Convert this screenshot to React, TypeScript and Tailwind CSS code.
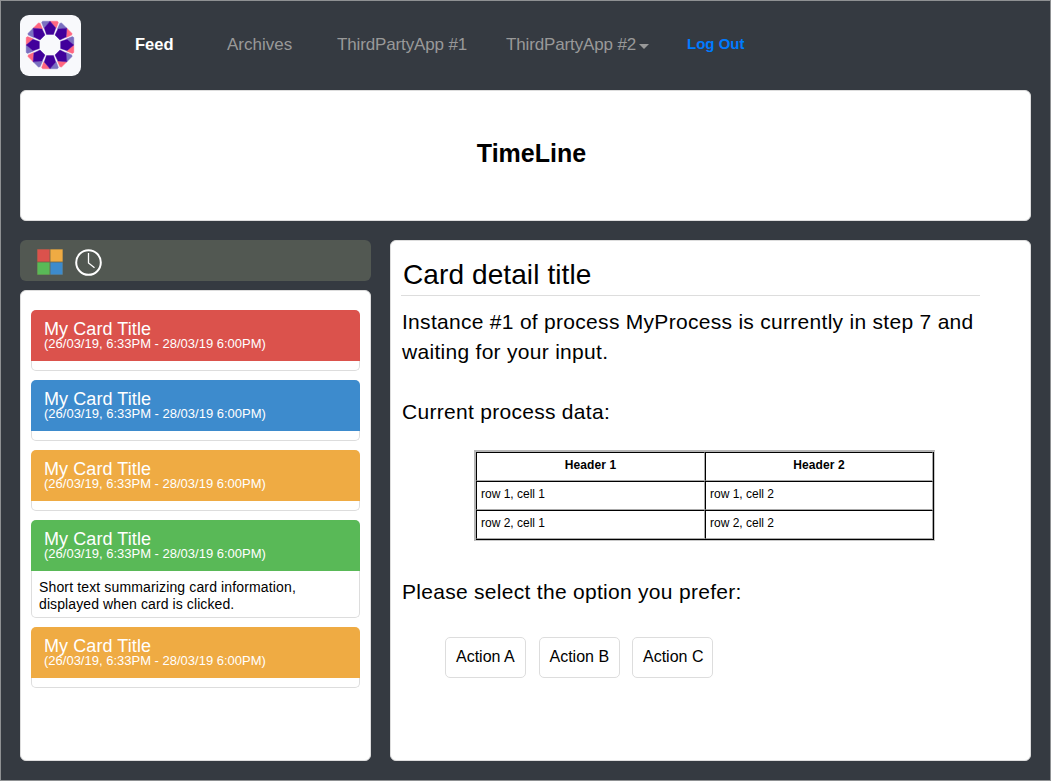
type Card = { color: string; summary?: string[] };

const cards: Card[] = [
  { color: "bg-[#db524c]" },
  { color: "bg-[#3d8bcd]" },
  { color: "bg-[#efab43]" },
  {
    color: "bg-[#59b957]",
    summary: ["Short text summarizing card information,", "displayed when card is clicked."],
  },
  { color: "bg-[#efab43]" },
];

const petals = [0, 45, 90, 135, 180, 225, 270, 315];

function Logo() {
  return (
    <div className="flex h-[61px] w-[61px] shrink-0 items-center justify-center rounded-[9px] bg-[#f8f9fc] pr-[2px] pb-px">
      <svg width="50" height="50" viewBox="-25 -25 50 50">
        {petals.map((angle) => (
          <g key={angle} transform={`rotate(${angle})`} strokeLinejoin="round" strokeWidth="0.4">
            <path d="M0-23.8H-7.4L-8.4-22.4L-6.2-16.8Z" fill="#7a70c0" stroke="#7a70c0" />
            <path d="M0-23.8H7.4L8.4-22.4L6.2-16.8Z" fill="#ff6680" stroke="#ff6680" />
            <path d="M0-23.8L5.8-17L3.5-10.6H-3.5L-5.8-17Z" fill="#41009b" stroke="#41009b" />
          </g>
        ))}
      </svg>
    </div>
  );
}

function NavBar() {
  return (
    <header className="flex h-[61px] items-center">
      <Logo />
      <nav className="flex items-center pb-px pl-[54px] text-[17px] leading-5 text-[#999]">
        <a className="mb-0.5 w-[92px] text-[16.5px] font-bold text-white">Feed</a>
        <a className="w-[110px]">Archives</a>
        <a className="w-[169px] tracking-[-0.14px]">ThirdPartyApp #1</a>
        <a className="flex w-[181px] items-center gap-[3px] tracking-[-0.14px]">
          ThirdPartyApp #2
          <svg width="10" height="5" viewBox="0 0 10 5" className="mt-[2px] shrink-0">
            <path d="M0 0H10L5 5Z" fill="#999" />
          </svg>
        </a>
        <a className="mb-0.5 text-[15px] font-bold text-[#007bff]">Log Out</a>
      </nav>
    </header>
  );
}

function Toolbar() {
  return (
    <div className="flex h-[41px] items-center gap-3 rounded-md bg-[#525852] pt-[3px] pl-[17px]">
      <svg width="26" height="26" viewBox="0 0 26 26">
        <rect width="26" height="26" fill="#6b6448" />
        <rect x="0.4" y="0.4" width="12.2" height="12.2" fill="#db524c" />
        <rect x="13.4" y="0.4" width="12.2" height="12.2" fill="#efab43" />
        <rect x="0.4" y="13.4" width="12.2" height="12.2" fill="#59b957" />
        <rect x="13.4" y="13.4" width="12.2" height="12.2" fill="#3d8bcd" />
      </svg>
      <svg width="27" height="27" viewBox="0 0 27 27" fill="none" stroke="#fff">
        <circle cx="13.5" cy="13.5" r="12.3" strokeWidth="2" />
        <path d="M13.5 4V14L19.5 18.7" strokeWidth="1.3" />
      </svg>
    </div>
  );
}

function FeedCard({ color, summary }: Card) {
  return (
    <article>
      <div className={`h-[51px] rounded-t-[5px] pt-[11px] pl-[13px] text-white ${color}`}>
        <h2 className="text-[18px] leading-4 tracking-[0.08px]">My Card Title</h2>
        <p className="text-[13px] leading-[13px]">(26/03/19, 6:33PM - 28/03/19 6:00PM)</p>
      </div>
      <div className="min-h-[10px] rounded-b-[5px] border border-t-0 border-[#ddd]">
        {summary && (
          <p className="h-[46px] pt-[8px] pl-[7px] text-[14px] leading-[17px] tracking-[0.14px]">
            {summary[0]}
            <br />
            <span className="tracking-[0.1px]">{summary[1]}</span>
          </p>
        )}
      </div>
    </article>
  );
}

function DataTable() {
  const cell = "h-[29px] border border-t-black border-l-black border-r-[#aaa] border-b-[#aaa] px-1 pt-[5px] pb-0 align-top";
  return (
    <div className="ml-[73px] w-[461px] border-t-2 border-r border-b border-l-2 border-t-[#b5b5b5] border-r-[#c8c8c8] border-b-[#c8c8c8] border-l-[#b5b5b5]">
      <div className="border-r border-b border-black">
        <table className="w-full table-fixed border-separate border-spacing-0 text-[12px] leading-[14px]">
          <colgroup>
            <col className="w-[229px]" />
            <col className="w-[228px]" />
          </colgroup>
          <thead>
            <tr>
              <th className={`${cell} tracking-[0.12px]`}>Header 1</th>
              <th className={`${cell} tracking-[0.12px]`}>Header 2</th>
            </tr>
          </thead>
          <tbody>
            <tr>
              <td className={cell}>row 1, cell 1</td>
              <td className={cell}>row 1, cell 2</td>
            </tr>
            <tr>
              <td className={cell}>row 2, cell 1</td>
              <td className={cell}>row 2, cell 2</td>
            </tr>
          </tbody>
        </table>
      </div>
    </div>
  );
}

function CardDetail() {
  return (
    <section className="flex-1 rounded-md border border-[#ddd] bg-white pl-2.5">
      <div className="w-[579px]">
        <h2 className="h-[55px] border-b border-[#ddd] pt-[18px] pl-0.5 text-[28px] leading-8 tracking-[0.1px]">
          Card detail title
        </h2>
        <div className="pt-[11px] pl-px text-[21px] leading-[30px] tracking-[0.29px]">
          <p>Instance #1 of process MyProcess is currently in step 7 and waiting for your input.</p>
          <p className="mt-[30px] mb-[23px]">Current process data:</p>
        </div>
        <DataTable />
        <p className="mt-9 pl-px text-[21px] leading-[30px] tracking-[0.29px]">Please select the option you prefer:</p>
        <div className="mt-[30px] ml-11 flex gap-[12.5px]">
          {["Action A", "Action B", "Action C"].map((label) => (
            <button
              key={label}
              className="h-[41px] w-[81px] rounded-[5px] border border-[#ddd] pt-0 pr-0 pb-px pl-[10px] text-left text-[16px] whitespace-nowrap"
            >
              {label}
            </button>
          ))}
        </div>
      </div>
    </section>
  );
}

export default function App() {
  return (
    <div
      className="flex h-[781px] w-[1051px] flex-col border border-[#8f9193] bg-[#353a41] px-[19px] pt-3.5 pb-[19px] text-black"
      style={{ fontFamily: '"Liberation Sans", Arial, sans-serif' }}
    >
      <NavBar />
      <section className="mt-3.5 flex h-[131px] shrink-0 items-center justify-center rounded-md border border-[#ddd] bg-white pb-1 pl-3">
        <h1 className="text-[25px] font-bold">TimeLine</h1>
      </section>
      <main className="mt-[19px] flex min-h-0 flex-1 gap-[19px]">
        <aside className="flex w-[351px] flex-col gap-[9px]">
          <Toolbar />
          <div className="flex flex-1 flex-col gap-[9px] rounded-md border border-[#ddd] bg-white px-2.5 pt-[19px]">
            {cards.map((card, i) => (
              <FeedCard key={i} {...card} />
            ))}
          </div>
        </aside>
        <CardDetail />
      </main>
    </div>
  );
}
